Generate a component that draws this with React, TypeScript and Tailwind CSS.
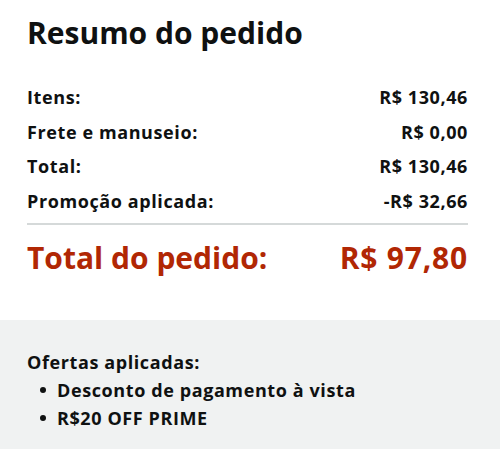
export default function App() {
  const rows = [
    ['Itens:', 'R$ 130,46'],
    ['Frete e manuseio:', 'R$ 0,00'],
    ['Total:', 'R$ 130,46'],
    ['Promoção aplicada:', '-R$ 32,66'],
  ]

  return (
    <div className="w-[500px] h-[449px] bg-white text-[#0f1111] font-['Open_Sans',sans-serif] flex flex-col">
      <div className="pl-[27px] pr-[32px] pt-[13px]">
        <h1 className="text-[30px] leading-[40px] font-bold">Resumo do pedido</h1>
        <div className="mt-[27px] flex flex-col">
          {rows.map(([label, value]) => (
            <div key={label} className="flex justify-between text-[18px] leading-[34.5px] font-bold tracking-[0.6px]">
              <span>{label}</span>
              <span>{value}</span>
            </div>
          ))}
        </div>
        <div className="mt-[5px] h-[2px] bg-[#d5d9d9]" />
        <div className="mt-[13px] flex justify-between text-[30px] leading-[40px] font-bold text-[#b12704]">
          <span>Total do pedido:</span>
          <span className="tracking-[0.8px]">R$ 97,80</span>
        </div>
      </div>
      <div className="mt-auto h-[129px] bg-[#f0f2f2] pl-[27px] pt-[28px] text-[18px] leading-[28px] font-bold tracking-[0.6px]">
        <p>Ofertas aplicadas:</p>
        <ul className="pl-[13px]">
          <li className="flex items-center gap-[11px]">
            <span className="w-[6px] h-[6px] rounded-full bg-[#0f1111]" />
            Desconto de pagamento à vista
          </li>
          <li className="flex items-center gap-[11px]">
            <span className="w-[6px] h-[6px] rounded-full bg-[#0f1111]" />
            R$20 OFF PRIME
          </li>
        </ul>
      </div>
    </div>
  )
}
